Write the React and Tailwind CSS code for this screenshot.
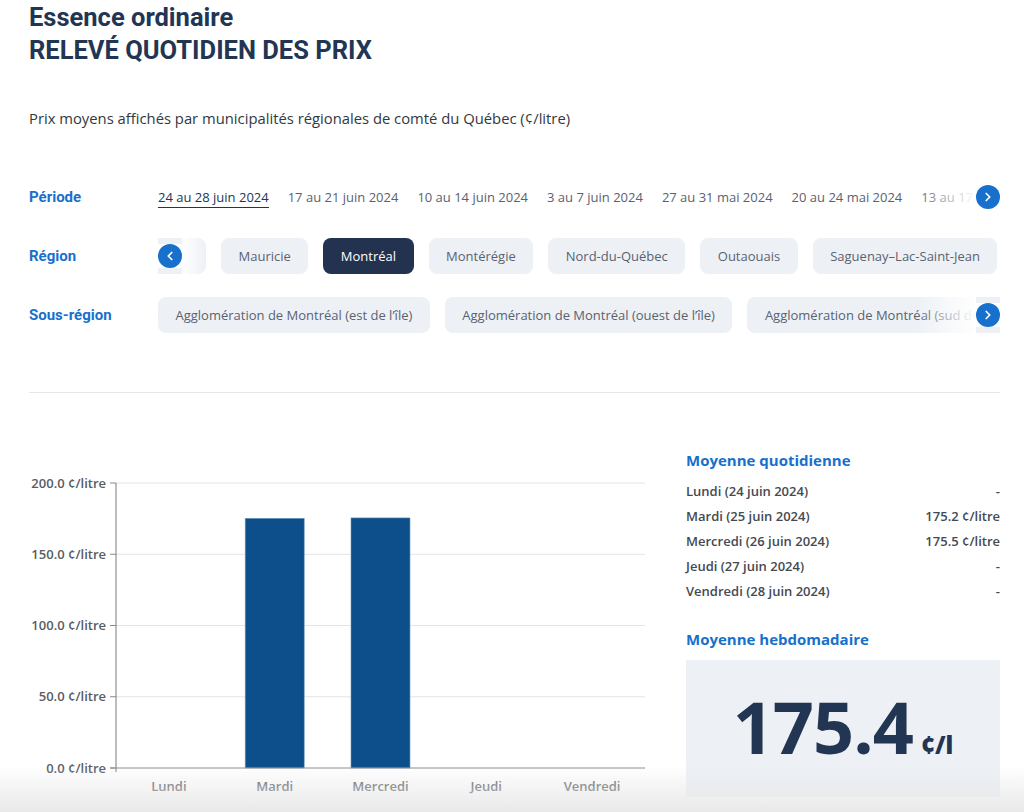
import { ChevronLeft, ChevronRight } from "lucide-react"

const PERIODS = [
  "24 au 28 juin 2024",
  "17 au 21 juin 2024",
  "10 au 14 juin 2024",
  "3 au 7 juin 2024",
  "27 au 31 mai 2024",
  "20 au 24 mai 2024",
  "13 au 17 mai 2024",
]

const REGIONS = ["Mauricie", "Montréal", "Montérégie", "Nord-du-Québec", "Outaouais", "Saguenay–Lac-Saint-Jean"]

const SUBREGIONS = [
  "Agglomération de Montréal (est de l’île)",
  "Agglomération de Montréal (ouest de l’île)",
  "Agglomération de Montréal (sud de l’île)",
]

const DAILY = [
  ["Lundi (24 juin 2024)", "-"],
  ["Mardi (25 juin 2024)", "175.2 ¢/litre"],
  ["Mercredi (26 juin 2024)", "175.5 ¢/litre"],
  ["Jeudi (27 juin 2024)", "-"],
  ["Vendredi (28 juin 2024)", "-"],
]

const DAYS = [
  ["Lundi", null],
  ["Mardi", 175.2],
  ["Mercredi", 175.5],
  ["Jeudi", null],
  ["Vendredi", null],
]

function RoundBtn({ dir }) {
  const Icon = dir === "left" ? ChevronLeft : ChevronRight
  return (
    <span className="flex h-6 w-6 items-center justify-center rounded-full bg-[#1770cc] text-white">
      <Icon size={14} strokeWidth={3} />
    </span>
  )
}

function Pill({ children, active }) {
  return (
    <span
      className={
        active
          ? "shrink-0 whitespace-nowrap rounded-lg bg-[#22324f] px-[17.5px] leading-[36px] text-white"
          : "shrink-0 whitespace-nowrap rounded-lg bg-[#edf1f6] px-[17.5px] leading-[36px] text-[#5a6270]"
      }
    >
      {children}
    </span>
  )
}

function Label({ children }) {
  return <div className="w-[129px] shrink-0 font-['Roboto',sans-serif] text-[15px] font-bold text-[#1770cc]">{children}</div>
}

function Chart() {
  const grid = [0, 50, 100, 150, 200]
  const y = v => 318 - (v / 200) * 285
  const colW = (616 - 87) / 5
  return (
    <svg width="657" height="362" className="mt-[1px] block shrink-0 font-['Open_Sans',sans-serif]">
      {grid.map(v => (
        <g key={v}>
          {v > 0 && <line x1="87" x2="616" y1={y(v)} y2={y(v)} stroke="#e4e4e4" strokeWidth="1" />}
          <line x1="81" x2="87" y1={y(v)} y2={y(v)} stroke="#8a8a8a" strokeWidth="1" />
          <text x="77" y={y(v) + 4.5} textAnchor="end" fontSize="13" fontWeight="600" fill="#585c63">
            {v.toFixed(1)} ¢/litre
          </text>
        </g>
      ))}
      {DAYS.map(([d, v], i) => {
        const cx = 87 + colW * i + colW / 2
        return (
          <g key={d}>
            {v && (
              <rect x={cx - 29.5} y={y(v)} width="59" height={318 - y(v)} fill="#0c4f8a" stroke="#6f96bd" strokeWidth="0.6" />
            )}
            <text x={cx} y="340.5" textAnchor="middle" fontSize="13" fontWeight="600" fill="#585c63">
              {d}
            </text>
          </g>
        )
      })}
      <line x1="87" x2="87" y1="33" y2="322" stroke="#7a7a7a" strokeWidth="1" />
      <line x1="81" x2="616" y1="318" y2="318" stroke="#8a8a8a" strokeWidth="1" />
    </svg>
  )
}

export default function App() {
  return (
    <div className="relative h-[812px] w-[1024px] overflow-hidden bg-white pl-[29px] pr-[24px] font-['Open_Sans',sans-serif] text-[13px]">
      <h1 className="pt-[1px] font-['Roboto',sans-serif] text-[25.5px] font-bold leading-[33px] text-[#223654]">
        Essence ordinaire
        <br />
        RELEVÉ QUOTIDIEN DES PRIX
      </h1>

      <p className="mt-[40px] text-[14.8px] leading-[22px] text-[#333840]">
        Prix moyens affichés par municipalités régionales de comté du Québec (¢/litre)
      </p>

      <div className="mt-[50px] flex flex-col gap-[23px]">
        <div className="flex h-[36px] items-center">
          <Label>Période</Label>
          <div className="relative flex min-w-0 flex-1 items-center">
            <div className="flex gap-[19px] overflow-hidden whitespace-nowrap text-[#5a6270]">
              {PERIODS.map((p, i) => (
                <span
                  key={p}
                  className={i === 0 ? "shrink-0 border-b border-[#223654] leading-[20px] text-[#223654]" : "shrink-0 leading-[20px]"}
                >
                  {p}
                </span>
              ))}
            </div>
            <div className="absolute right-0 top-1/2 flex -translate-y-1/2 items-center">
              <span className="h-[30px] w-[60px] bg-gradient-to-r from-white/0 to-white" />
              <span className="bg-white">
                <RoundBtn dir="right" />
              </span>
            </div>
          </div>
        </div>

        <div className="flex h-[36px] items-center">
          <Label>Région</Label>
          <div className="relative flex min-w-0 flex-1 items-center">
            <div className="flex gap-[15px] overflow-hidden">
              <span className="ml-[-52px] h-[36px] w-[100px] shrink-0 rounded-lg bg-[#edf1f6]" />
              {REGIONS.map(r => (
                <Pill key={r} active={r === "Montréal"}>
                  {r}
                </Pill>
              ))}
            </div>
            <div className="absolute left-0 top-1/2 flex -translate-y-1/2 items-center">
              <span className="bg-white">
                <RoundBtn dir="left" />
              </span>
              <span className="h-[36px] w-[24px] bg-gradient-to-r from-white to-white/0" />
            </div>
          </div>
        </div>

        <div className="flex h-[36px] items-center">
          <Label>Sous-région</Label>
          <div className="relative flex min-w-0 flex-1 items-center">
            <div className="flex gap-[15px] overflow-hidden">
              {SUBREGIONS.map(r => (
                <Pill key={r}>{r}</Pill>
              ))}
            </div>
            <div className="absolute right-0 top-1/2 flex -translate-y-1/2 items-center">
              <span className="h-[36px] w-[60px] bg-gradient-to-r from-white/0 to-white" />
              <span className="bg-white">
                <RoundBtn dir="right" />
              </span>
            </div>
          </div>
        </div>
      </div>

      <div className="mt-[59px] border-t border-[#e3e6ea]" />

      <div className="mt-[56px] flex">
        <Chart />
        <div className="w-[314px] shrink-0">
          <h2 className="text-[15px] font-bold leading-[22px] text-[#1770cc]">Moyenne quotidienne</h2>
          <div className="mt-[8px] font-semibold text-[#444a52]">
            {DAILY.map(([d, v]) => (
              <div key={d} className="flex justify-between leading-[25px]">
                <span>{d}</span>
                <span>{v}</span>
              </div>
            ))}
          </div>
          <h2 className="mt-[24px] text-[15px] font-bold leading-[22px] text-[#1770cc]">Moyenne hebdomadaire</h2>
          <div className="mt-[10px] flex h-[137px] items-baseline justify-center bg-[#edf1f6] pt-[26px] text-[#223654]">
            <span className="text-[72px] font-bold leading-[80px] tracking-[-1px]">175.4</span>
            <span className="ml-[8px] text-[24px] font-extrabold">¢/l</span>
          </div>
        </div>
      </div>

      <div className="pointer-events-none absolute inset-x-0 bottom-0 h-[46px] bg-gradient-to-b from-white/0 to-[#e6e6e6]/90" />
    </div>
  )
}
